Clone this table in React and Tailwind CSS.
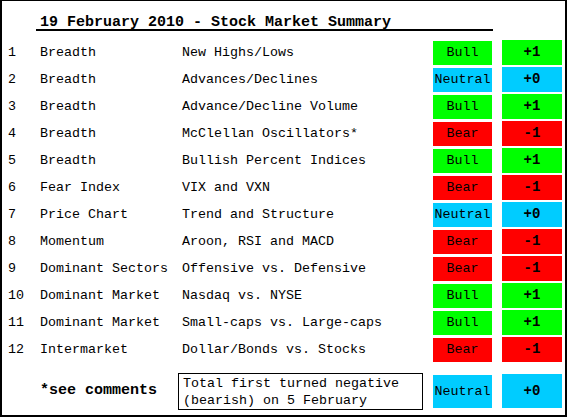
import React from 'react';

const mono = { fontFamily: '"Liberation Mono", "Courier New", monospace' };

const rows = [
  ['1', 'Breadth', 'New Highs/Lows', 'Bull', '+1'],
  ['2', 'Breadth', 'Advances/Declines', 'Neutral', '+0'],
  ['3', 'Breadth', 'Advance/Decline Volume', 'Bull', '+1'],
  ['4', 'Breadth', 'McClellan Oscillators*', 'Bear', '-1'],
  ['5', 'Breadth', 'Bullish Percent Indices', 'Bull', '+1'],
  ['6', 'Fear Index', 'VIX and VXN', 'Bear', '-1'],
  ['7', 'Price Chart', 'Trend and Structure', 'Neutral', '+0'],
  ['8', 'Momentum', 'Aroon, RSI and MACD', 'Bear', '-1'],
  ['9', 'Dominant Sectors', 'Offensive vs. Defensive', 'Bear', '-1'],
  ['10', 'Dominant Market', 'Nasdaq vs. NYSE', 'Bull', '+1'],
  ['11', 'Dominant Market', 'Small-caps vs. Large-caps', 'Bull', '+1'],
  ['12', 'Intermarket', 'Dollar/Bonds vs. Stocks', 'Bear', '-1'],
];

const bg = {
  Bull: 'bg-[#00ff00]',
  Neutral: 'bg-[#00ccff]',
  Bear: 'bg-[#ff0000]',
};

function Row({ n, group, name, signal, value }) {
  return (
    <div className="flex h-[27px] text-[13.333px] text-black">
      <div className="w-[38px] pl-[6px] flex items-center">{n}</div>
      <div className="w-[142px] flex items-center whitespace-nowrap">{group}</div>
      <div className="w-[251px] flex items-center whitespace-nowrap">{name}</div>
      <div className={`w-[59px] h-[24px] mt-[2px] flex items-center justify-center ${bg[signal]}`}>
        {signal}
      </div>
      <div className={`ml-[10px] w-[60px] h-[25px] mt-[1px] flex items-center justify-center font-bold text-[14px] ${bg[signal]}`}>
        {value}
      </div>
    </div>
  );
}

export default function App() {
  return (
    <div className="w-[570px] h-[418px] bg-white" style={mono}>
      <div className="w-[567px] h-[417px] border-t border-l-2 border-r-2 border-b-2 border-black">
        {/* Title */}
        <div className="ml-[34px] w-[457px] h-[30px] border-b-2 border-black pl-[4px] pt-[9px]">
          <span className="text-[15px] leading-[15px] font-bold whitespace-nowrap">
            19 February 2010 - Stock Market Summary
          </span>
        </div>

        <div className="mt-[8px]">
          {rows.map(([n, group, name, signal, value]) => (
            <Row key={n} n={n} group={group} name={name} signal={signal} value={value} />
          ))}
        </div>

        {/* Footer */}
        <div className="mt-[10px] flex h-[37px] pl-[38px]">
          <div className="w-[138px] flex items-center font-bold text-[15px] whitespace-nowrap">
            *see comments
          </div>
          <div className="w-[245px] h-[37px] border border-black pl-[4px] flex flex-col justify-center text-[13.333px] leading-[17px] whitespace-nowrap">
            <span>Total first turned negative</span>
            <span>(bearish) on 5 February</span>
          </div>
          <div className="ml-[10px] w-[59px] h-[33px] mt-[2px] bg-[#00ccff] flex items-center justify-center text-[13.333px]">
            Neutral
          </div>
          <div className="ml-[10px] w-[60px] h-[34px] mt-[1px] bg-[#00ccff] flex items-center justify-center font-bold text-[14px]">
            +0
          </div>
        </div>
      </div>
    </div>
  );
}
